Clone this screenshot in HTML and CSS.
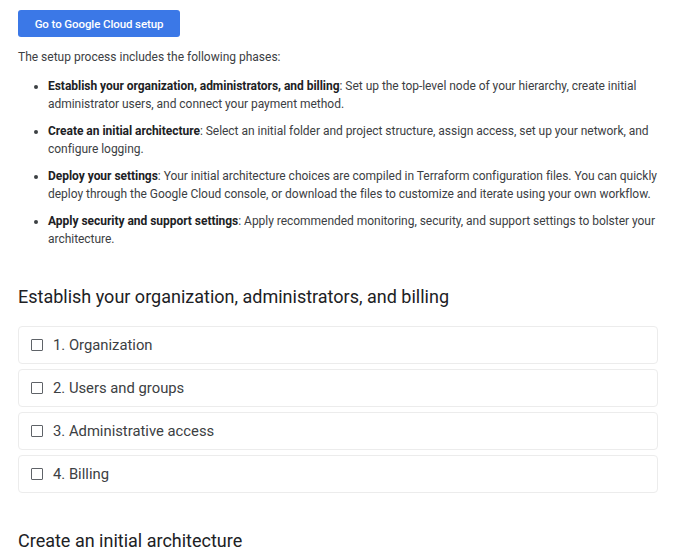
FILE: index.html
```html
<!DOCTYPE html>
<html>
<head>
<meta charset="utf-8">
<link rel="stylesheet" href="styles.css">
</head>
<body>
<div class="page">
  <a class="btn" href="#">Go to Google Cloud setup</a>
  <p class="intro">The setup process includes the following phases:</p>
  <ul class="phases">
    <li><b>Establish your organization, administrators, and billing</b>: Set up the top-level node of your hierarchy, create initial administrator users, and connect your payment method.</li>
    <li><b>Create an initial architecture</b>: Select an initial folder and project structure, assign access, set up your network, and configure logging.</li>
    <li><b>Deploy your settings</b>: Your initial architecture choices are compiled in Terraform configuration files. You can quickly deploy through the Google Cloud console, or download the files to customize and iterate using your own workflow.</li>
    <li><b>Apply security and support settings</b>: Apply recommended monitoring, security, and support settings to bolster your architecture.</li>
  </ul>
  <h2 class="section">Establish your organization, administrators, and billing</h2>
  <div class="cards">
    <div class="card"><span class="box"></span><span class="label">1. Organization</span></div>
    <div class="card"><span class="box"></span><span class="label">2. Users and groups</span></div>
    <div class="card"><span class="box"></span><span class="label">3. Administrative access</span></div>
    <div class="card"><span class="box"></span><span class="label">4. Billing</span></div>
  </div>
  <h2 class="section second">Create an initial architecture</h2>
</div>
</body>
</html>
```

FILE: styles.css
```css
html, body {
  margin: 0;
  padding: 0;
  background: #fff;
}
.page {
  padding: 10px 0 0 18px;
  font-family: Roboto, "Liberation Sans", sans-serif;
  color: #3c4043;
  font-size: 12px;
}
.btn {
  display: inline-flex;
  align-items: center;
  justify-content: center;
  width: 162px;
  height: 27px;
  background: #3b78e7;
  color: #fff;
  border-radius: 3px;
  font-weight: 500;
  font-size: 11.5px;
  text-decoration: none;
  letter-spacing: -0.1px;
}
.intro {
  margin: 12px 0 0 0;
  line-height: 17px;
}
.phases {
  width: 624px;
  margin: 12px 0 0 0;
  padding: 0 0 0 30px;
  line-height: 17.5px;
  letter-spacing: -0.03px;
}
.phases li {
  margin-bottom: 10px;
}
.phases b {
  font-weight: 700;
  color: #202124;
}
.section {
  margin: 38px 0 0 0;
  font-weight: 400;
  font-size: 18px;
  color: #202124;
  line-height: 22px;
}
.cards {
  width: 640px;
  margin-top: 18px;
  display: flex;
  flex-direction: column;
  gap: 5px;
}
.card {
  height: 36px;
  border: 1px solid #ececec;
  border-radius: 4px;
  display: flex;
  align-items: center;
  padding-left: 12px;
}
.box {
  width: 10px;
  height: 10px;
  border: 1.8px solid #5f6368;
  border-radius: 1px;
  margin-right: 10px;
}
.label {
  font-size: 14.8px;
  color: #3c4043;
}
.second {
  margin-top: 37px;
}
```
